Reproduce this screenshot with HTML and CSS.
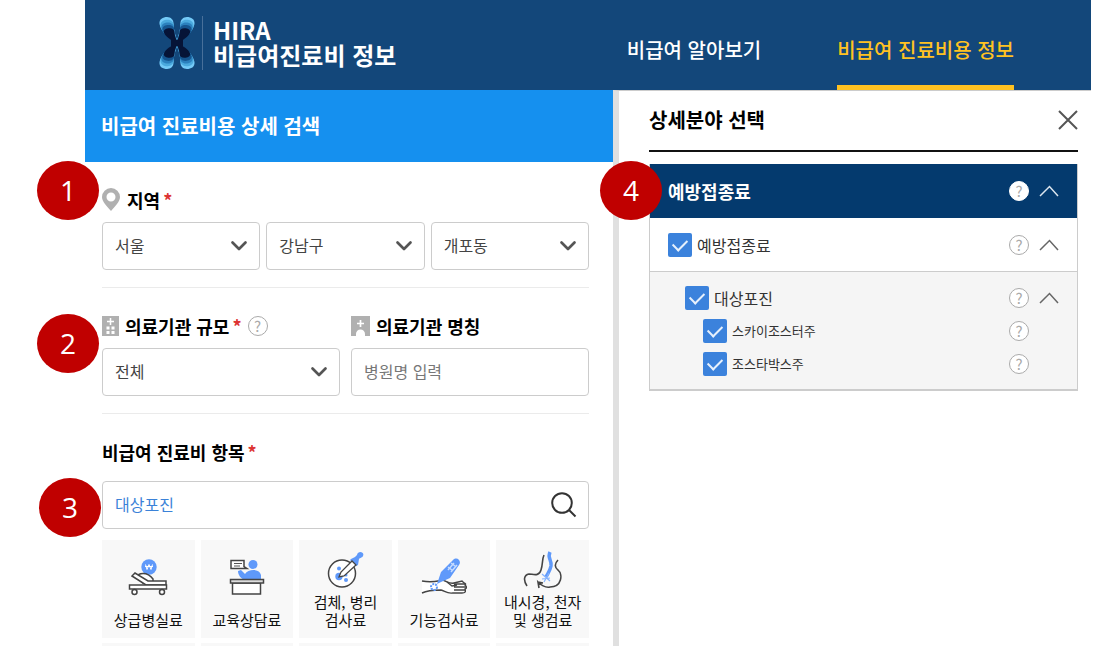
FILE: index.html
```html
<!DOCTYPE html>
<html lang="ko">
<head>
<meta charset="utf-8">
<meta name="viewport" content="width=device-width, initial-scale=1">
<title>HIRA 비급여진료비 정보</title>
<link rel="stylesheet" href="styles.css">
</head>
<body>
<svg class="sprite" aria-hidden="true">
  <symbol id="down" viewBox="0 0 18 18"><path d="M2.500 5.500 9 12l6.500-6.500" fill="none" stroke="currentColor" stroke-width="2.700" stroke-linecap="round" stroke-linejoin="round"/></symbol>
  <symbol id="up" viewBox="0 0 20 20"><path d="M1 15 10.500 5.500 19 15" fill="none" stroke="currentColor" stroke-width="1.500"/></symbol>
</svg>
<header class="site-header">
  <a class="logo" href="#">
    <svg class="logo-mark" viewBox="0 0 36 52" aria-hidden="true">
      <defs>
        <path id="lobe" d="M-1 1C-5-4-16-10-17.500-19-18-24-14-26-10-26-6-26-3.500-23-3.500-20-3.500-13-1-6 0-3Z"/>
        <g id="lobes"><use href="#lobe"/><use href="#lobe" transform="scale(-1 1)"/><use href="#lobe" transform="scale(1 -1)"/><use href="#lobe" transform="scale(-1 -1)"/></g>
      </defs>
      <g transform="translate(18 26)">
        <use href="#lobes" fill="#74caf7"/>
        <use href="#lobes" fill="#4aa9dd" transform="scale(.94 .89)"/>
        <use href="#lobes" fill="#2b80bd" transform="scale(.89 .79)"/>
        <use href="#lobes" fill="#15558f" transform="scale(.83 .69)"/>
        <use href="#lobes" fill="#061437" transform="scale(.75 .57)"/>
        <path d="M-6-3h12v6H-6z" fill="#061437"/>
      </g>
    </svg>
    <span class="logo-text"><span>HIRA</span><span>비급여진료비 정보</span></span>
  </a>
  <nav class="main-nav">
    <a href="#">비급여 알아보기</a>
    <a class="active" href="#" aria-current="page">비급여 진료비용 정보</a>
  </nav>
</header>
<main class="workspace">
  <section class="search-panel">
    <h1 class="search-heading">비급여 진료비용 상세 검색</h1>
    <form class="search-form">
      <div class="group">
        <span class="badge">1</span>
        <div class="label-row">
          <svg class="pin" viewBox="0 0 18 24" aria-hidden="true"><path fill="#b0b0b0" fill-rule="evenodd" d="M9 0a9 9 0 0 1 9 9c0 5-5 9-9 14C5 18 0 14 0 9a9 9 0 0 1 9-9Zm0 4.500a4.500 4.500 0 1 0 0 9 4.500 4.500 0 0 0 0-9Z"/></svg>
          <label for="city">지역</label><span class="required">*</span>
        </div>
        <div class="fields">
          <div class="select"><select id="city"><option>서울</option></select><svg><use href="#down"/></svg></div>
          <div class="select"><select aria-label="시군구"><option>강남구</option></select><svg><use href="#down"/></svg></div>
          <div class="select"><select aria-label="읍면동"><option>개포동</option></select><svg><use href="#down"/></svg></div>
        </div>
      </div>
      <div class="group pair">
        <span class="badge badge-scale">2</span>
        <div>
          <div class="label-row">
            <svg class="building" viewBox="0 0 17 20" aria-hidden="true"><path fill="#b0b0b0" d="M0 0h17v20H0z"/><path d="M8.500 2v7M5 5.500h7" stroke="#fff" stroke-width="1.500"/><path fill="#fff" d="M4.500 10.500h3v3h-3zm5 0h3v3h-3zm-5 4.500h3v3h-3zm5 0h3v3h-3z"/></svg>
            <label for="scale">의료기관 규모</label><span class="required">*</span>
            <button class="help" type="button" aria-label="의료기관 규모 도움말">?</button>
          </div>
          <div class="select"><select id="scale"><option>전체</option></select><svg><use href="#down"/></svg></div>
        </div>
        <div>
          <div class="label-row">
            <svg class="hospital" viewBox="0 0 19 20" aria-hidden="true"><path fill="#b0b0b0" d="M0 0h19v20h-5v-2a4.500 4.500 0 0 0-9 0v2H0z"/><path d="M9.500 4v7M6 7.500h7" stroke="#fff" stroke-width="1.700"/></svg>
            <label for="hospital">의료기관 명칭</label>
          </div>
          <input class="text-field" id="hospital" type="text" placeholder="병원명 입력">
        </div>
      </div>
      <div class="group items">
        <span class="badge badge-items">3</span>
        <div class="label-row"><label for="item">비급여 진료비 항목</label><span class="required">*</span></div>
        <div class="search-box">
          <input class="text-field" id="item" type="text" value="대상포진">
          <button type="submit" aria-label="검색"><svg viewBox="0 0 26 26"><circle cx="11" cy="11" r="9.800"/><path d="m18 18 6.500 6.500"/></svg></button>
        </div>
        <div class="tiles">
          <button class="tile" type="button">
            <svg viewBox="0 0 42 38" aria-hidden="true">
              <circle cx="22" cy="9" r="7.700" fill="#5f99fa"/><path d="m18.500 6.500 1.500 5 2-5 2 5 1.500-5m-7.500 2h8" fill="none" stroke="#fff"/>
              <g fill="#fff" stroke="#444" stroke-width="1.500"><path d="M10 19c1-4 10-6 16 2v4H16Z"/><path d="m5 18 3-3 13 8h18v4H19Z"/><path d="M2.500 27h37v4h-37z"/><circle cx="7.500" cy="34" r="2.500"/><circle cx="35" cy="34" r="2.500"/></g>
            </svg>
            <span>상급병실료</span>
          </button>
          <button class="tile" type="button">
            <svg viewBox="0 0 42 38" aria-hidden="true">
              <circle cx="27" cy="6.500" r="4.500" fill="#5f99fa"/><path fill="#5f99fa" d="m12 13 3-1 4 4c3-5 14-6 16 1v5H19c-4-1-7-5-7-9Z"/>
              <g fill="#fff" stroke="#444" stroke-width="1.500"><path d="M5 2.500h13v6l3 2h-5H5Z"/><path d="M6.500 25h28v11h-28z"/><path fill="#ddd" d="M4.500 21.500h33V25h-33z"/></g><path d="M8 5.500h8M8 8h6" stroke="#555"/>
            </svg>
            <span>교육상담료</span>
          </button>
          <button class="tile" type="button">
            <svg viewBox="0 0 42 38" aria-hidden="true">
              <circle cx="18" cy="22.500" r="13.500" fill="#fff" stroke="#444" stroke-width="1.500"/>
              <g fill="#5f99fa"><circle cx="15" cy="25.500" r="3.700"/><circle cx="15" cy="17.500" r="2"/><circle cx="22" cy="29" r="2"/><circle cx="22" cy="24" r="1.500"/><path d="m27 8 4-2 2-2c1-5 8-3 6 1-1 2-4 2-4 3l-1 6-2 1-6-6Z"/></g>
              <path d="m28 10 4 4-12 11-5 1 2-5Z" fill="#fff" stroke="#444" stroke-width="1.300"/>
            </svg>
            <span>검체, 병리<br>검사료</span>
          </button>
          <button class="tile" type="button">
            <svg class="wide" viewBox="0 0 46 38" aria-hidden="true">
              <path d="M1 23c11 2 15 0 21-1 5 2 7 4 11 3l8-2 2 2c2 1 2 1 1 2 2 2 2 3 0 4 1 3 0 4-3 4h-9c-6 1-8-2-12-3-7 0-13 0-19 3" fill="#fff" stroke="#444" stroke-width="1.400"/>
              <path d="M33 26h11m-11 3h12m-12 3h11M26 24l5 4 5-1" fill="none" stroke="#444" stroke-width="1.400"/>
              <path fill="#5f99fa" d="m16 26 4-12L32 2c4-4 9 1 6 5l-9 13-9 4Z"/><path d="m27 12 6-7m-3 9 6-7m-6-2 4 3m-7 1 4 3" stroke="#c6dcff" stroke-width="1.500"/>
              <circle cx="13" cy="29" r="3" fill="none" stroke="#5f99fa" stroke-width="2" stroke-dasharray="2 1"/>
            </svg>
            <span>기능검사료</span>
          </button>
          <button class="tile" type="button">
            <svg viewBox="0 0 42 38" aria-hidden="true">
              <g fill="none" stroke="#444" stroke-width="1.600"><path d="M22 4c-2 4-1 9-3 15-2 7-8 4-12 4-5 1-6 6-2 12M36 9c-4 4-3 8 0 10 5 4 4 17-8 17-5 1-8-1-12-5l1 6m-1-6 5 1"/></g>
              <path d="M28 1c-3 6 2 8 1 14-1 5-3 7-5 11" fill="none" stroke="#5f99fa" stroke-width="3.500"/><path d="m20 23 8 7m-1-8-5 9m-2-3 8-1" stroke="#83b2ff" stroke-width="1.200"/>
            </svg>
            <span>내시경, 천자<br>및 생검료</span>
          </button>
          <div class="tile"></div><div class="tile"></div><div class="tile"></div><div class="tile"></div><div class="tile"></div>
        </div>
      </div>
    </form>
  </section>
  <aside class="detail-panel">
    <div class="detail-heading">
      <h2>상세분야 선택</h2>
      <button type="button" aria-label="닫기"><svg viewBox="0 0 20 20"><path d="m1 1 18 18m0-18L1 19"/></svg></button>
    </div>
    <div class="accordion">
      <span class="badge badge-detail">4</span>
      <div class="row row-title">
        <h3>예방접종료</h3>
        <button class="help help-filled" type="button" aria-label="예방접종료 도움말">?</button>
        <button class="toggle" type="button" aria-label="접기"><svg><use href="#up"/></svg></button>
      </div>
      <div class="row">
        <label><input type="checkbox" checked>예방접종료</label>
        <button class="help" type="button" aria-label="도움말">?</button>
        <button class="toggle" type="button" aria-label="접기"><svg><use href="#up"/></svg></button>
      </div>
      <div class="children">
        <div class="row level-2">
          <label><input type="checkbox" checked>대상포진</label>
          <button class="help" type="button" aria-label="대상포진 도움말">?</button>
          <button class="toggle" type="button" aria-label="접기"><svg><use href="#up"/></svg></button>
        </div>
        <div class="row level-3">
          <label><input type="checkbox" checked>스카이조스터주</label>
          <button class="help" type="button" aria-label="스카이조스터주 도움말">?</button>
        </div>
        <div class="row level-3">
          <label><input type="checkbox" checked>조스타박스주</label>
          <button class="help" type="button" aria-label="조스타박스주 도움말">?</button>
        </div>
      </div>
    </div>
  </aside>
</main>
</body>
</html>
```
FILE: styles.css
```css
* { box-sizing: border-box; }
body {
  margin: 0;
  padding: 0 4px 0 85px;
  height: 100vh;
  overflow: hidden;
  display: flex;
  flex-direction: column;
  background: #fff;
  color: #111;
  font: 16px/24px "Noto Sans CJK KR", sans-serif;
}
h1, h2, h3 { margin: 0; font-weight: 700; }
button, input, select { font: inherit; color: inherit; }
button { padding: 0; border: 0; background: none; cursor: pointer; }
a { color: inherit; text-decoration: none; }
svg { display: block; flex: none; }
.sprite { position: absolute; width: 0; height: 0; }

.site-header {
  flex: none;
  display: flex;
  justify-content: space-between;
  padding: 0 77px 0 74px;
  background: #13477a;
  color: #fff;
}
.logo { display: flex; align-items: center; gap: 7px; padding-bottom: 5px; }
.logo-mark { width: 36px; height: 52px; }
.logo-text {
  display: flex;
  flex-direction: column;
  padding: 1px 0 3px 10px;
  border-left: 1px solid #48709a;
  font-size: 24px;
  line-height: 25px;
  font-weight: 700;
}
.main-nav { display: flex; gap: 76px; font-size: 20px; font-weight: 500; }
.main-nav a { padding: 38px 0 23px; border-bottom: 5px solid transparent; white-space: nowrap; }
.main-nav .active { color: #ffc222; border-color: #ffc222; }

.workspace { flex: 1; min-height: 0; display: grid; grid-template-columns: 528fr 478fr; }
.search-heading {
  padding: 24px 16px;
  background: #1590ef;
  color: #fff;
  font-size: 20px;
}
.search-form { padding: 0 24px 0 17px; }
.group { position: relative; padding: 26px 0 17px; border-bottom: 1px solid #ebebeb; }
.pair { display: grid; grid-template-columns: 1fr 1fr; gap: 11px; }
.label-row {
  display: flex;
  align-items: center;
  gap: 6px;
  height: 24px;
  margin-bottom: 10px;
  font-size: 18px;
  font-weight: 700;
  color: #000;
}
.pin { width: 18px; height: 24px; margin-right: 1px; }
.building { width: 17px; height: 20px; }
.hospital { width: 19px; height: 20px; }
.required { margin-left: -3px; color: #d33; }
.fields { display: grid; grid-template-columns: repeat(3, 1fr); gap: 6px; }
.select { position: relative; }
.select select, .text-field {
  display: block;
  width: 100%;
  height: 48px;
  padding: 0 12px 2px;
  border: 1px solid #ccc;
  border-radius: 4px;
  background: #fff;
  color: #444;
}
.select select { appearance: none; }
.select svg {
  position: absolute;
  top: 15px;
  right: 12px;
  width: 18px;
  height: 18px;
  color: #555;
  pointer-events: none;
}
.text-field::placeholder { color: #777; opacity: 1; }
.items { border-bottom: 0; }
.items .label-row { margin-bottom: 17px; }
.search-box { position: relative; }
.search-box .text-field { color: #3b82d8; padding-right: 48px; }
.search-box button { position: absolute; right: 12px; top: 11px; }
.search-box svg { width: 26px; height: 26px; fill: none; stroke: #333; stroke-width: 2; }
.tiles {
  display: grid;
  grid-template-columns: repeat(5, 1fr);
  gap: 5px 6px;
  margin-top: 11px;
}
.tile {
  display: flex;
  flex-direction: column;
  align-items: center;
  justify-content: space-between;
  min-height: 98px;
  padding: 11px 0 9px;
  background: #f8f8f8;
  font-size: 15px;
  line-height: 18px;
  color: #111;
  white-space: nowrap;
}
.tile svg { width: 42px; height: 38px; margin-top: 7px; }
.tile .wide { width: 46px; }
.tile svg:has(+ span br) { margin-top: 0; }

.badge {
  position: absolute;
  z-index: 2;
  left: -65px;
  top: -1px;
  display: flex;
  align-items: center;
  justify-content: center;
  width: 62px;
  height: 59px;
  padding-bottom: 1px;
  border-radius: 50%;
  background: #c00000;
  color: #fff;
  font: 28px/40px "Open Sans", sans-serif;
}
.badge-scale { top: 26px; }
.badge-items { left: -63px; top: 64px; }
.badge-detail { left: -50px; top: -3px; }

.help {
  display: flex;
  align-items: center;
  justify-content: center;
  width: 20px;
  height: 20px;
  border: 1px solid #aaa;
  border-radius: 50%;
  background: #fff;
  color: #aaa;
  font-size: 15px;
  font-weight: 400;
  line-height: 18px;
}
.help-filled { border-color: #fff; }

.detail-panel {
  padding: 0 13px 0 30px;
  border-left: 6px solid #e0e0e0;
  border-top: 1px solid #ccc;
}
.detail-heading {
  display: flex;
  align-items: center;
  justify-content: space-between;
  height: 61px;
  padding-bottom: 1px;
  border-bottom: 2px solid #111;
}
.detail-heading h2 { font-size: 20px; color: #000; }
.detail-heading svg { width: 20px; height: 20px; fill: none; stroke: #555; stroke-width: 2; }
.accordion {
  position: relative;
  margin-top: 12px;
  border: 1px solid #ccc;
  border-top: 0;
  border-bottom-width: 2px;
}
.row {
  display: grid;
  grid-template-columns: 1fr 20px 20px;
  align-items: center;
  gap: 10px;
  min-height: 53px;
  padding: 0 18px;
}
.row label { display: flex; align-items: center; gap: 5px; color: #333; }
.row-title { min-height: 54px; background: #043a6e; color: #fff; }
.row-title h3 { font-size: 18px; }
.toggle { color: #666; }
.row-title .toggle { color: #dce5ee; }
.toggle svg { width: 20px; height: 20px; }
.children { padding: 9px 0; background: #f5f5f5; border-top: 1px solid #ccc; }
.children .row { min-height: 33px; }
.level-2 { padding-left: 35px; }
.row.level-3 { padding-left: 53px; font-size: 13px; }
input[type="checkbox"] {
  appearance: none;
  display: grid;
  place-items: center;
  width: 24px;
  height: 24px;
  margin: 0;
  border-radius: 2px;
  background: #3b82dc;
}
input[type="checkbox"]:checked::before {
  content: "";
  width: 12px;
  height: 7px;
  margin-bottom: 3px;
  border: solid #e6f0fc;
  border-width: 0 0 2px 2px;
  transform: rotate(-45deg);
}
```
